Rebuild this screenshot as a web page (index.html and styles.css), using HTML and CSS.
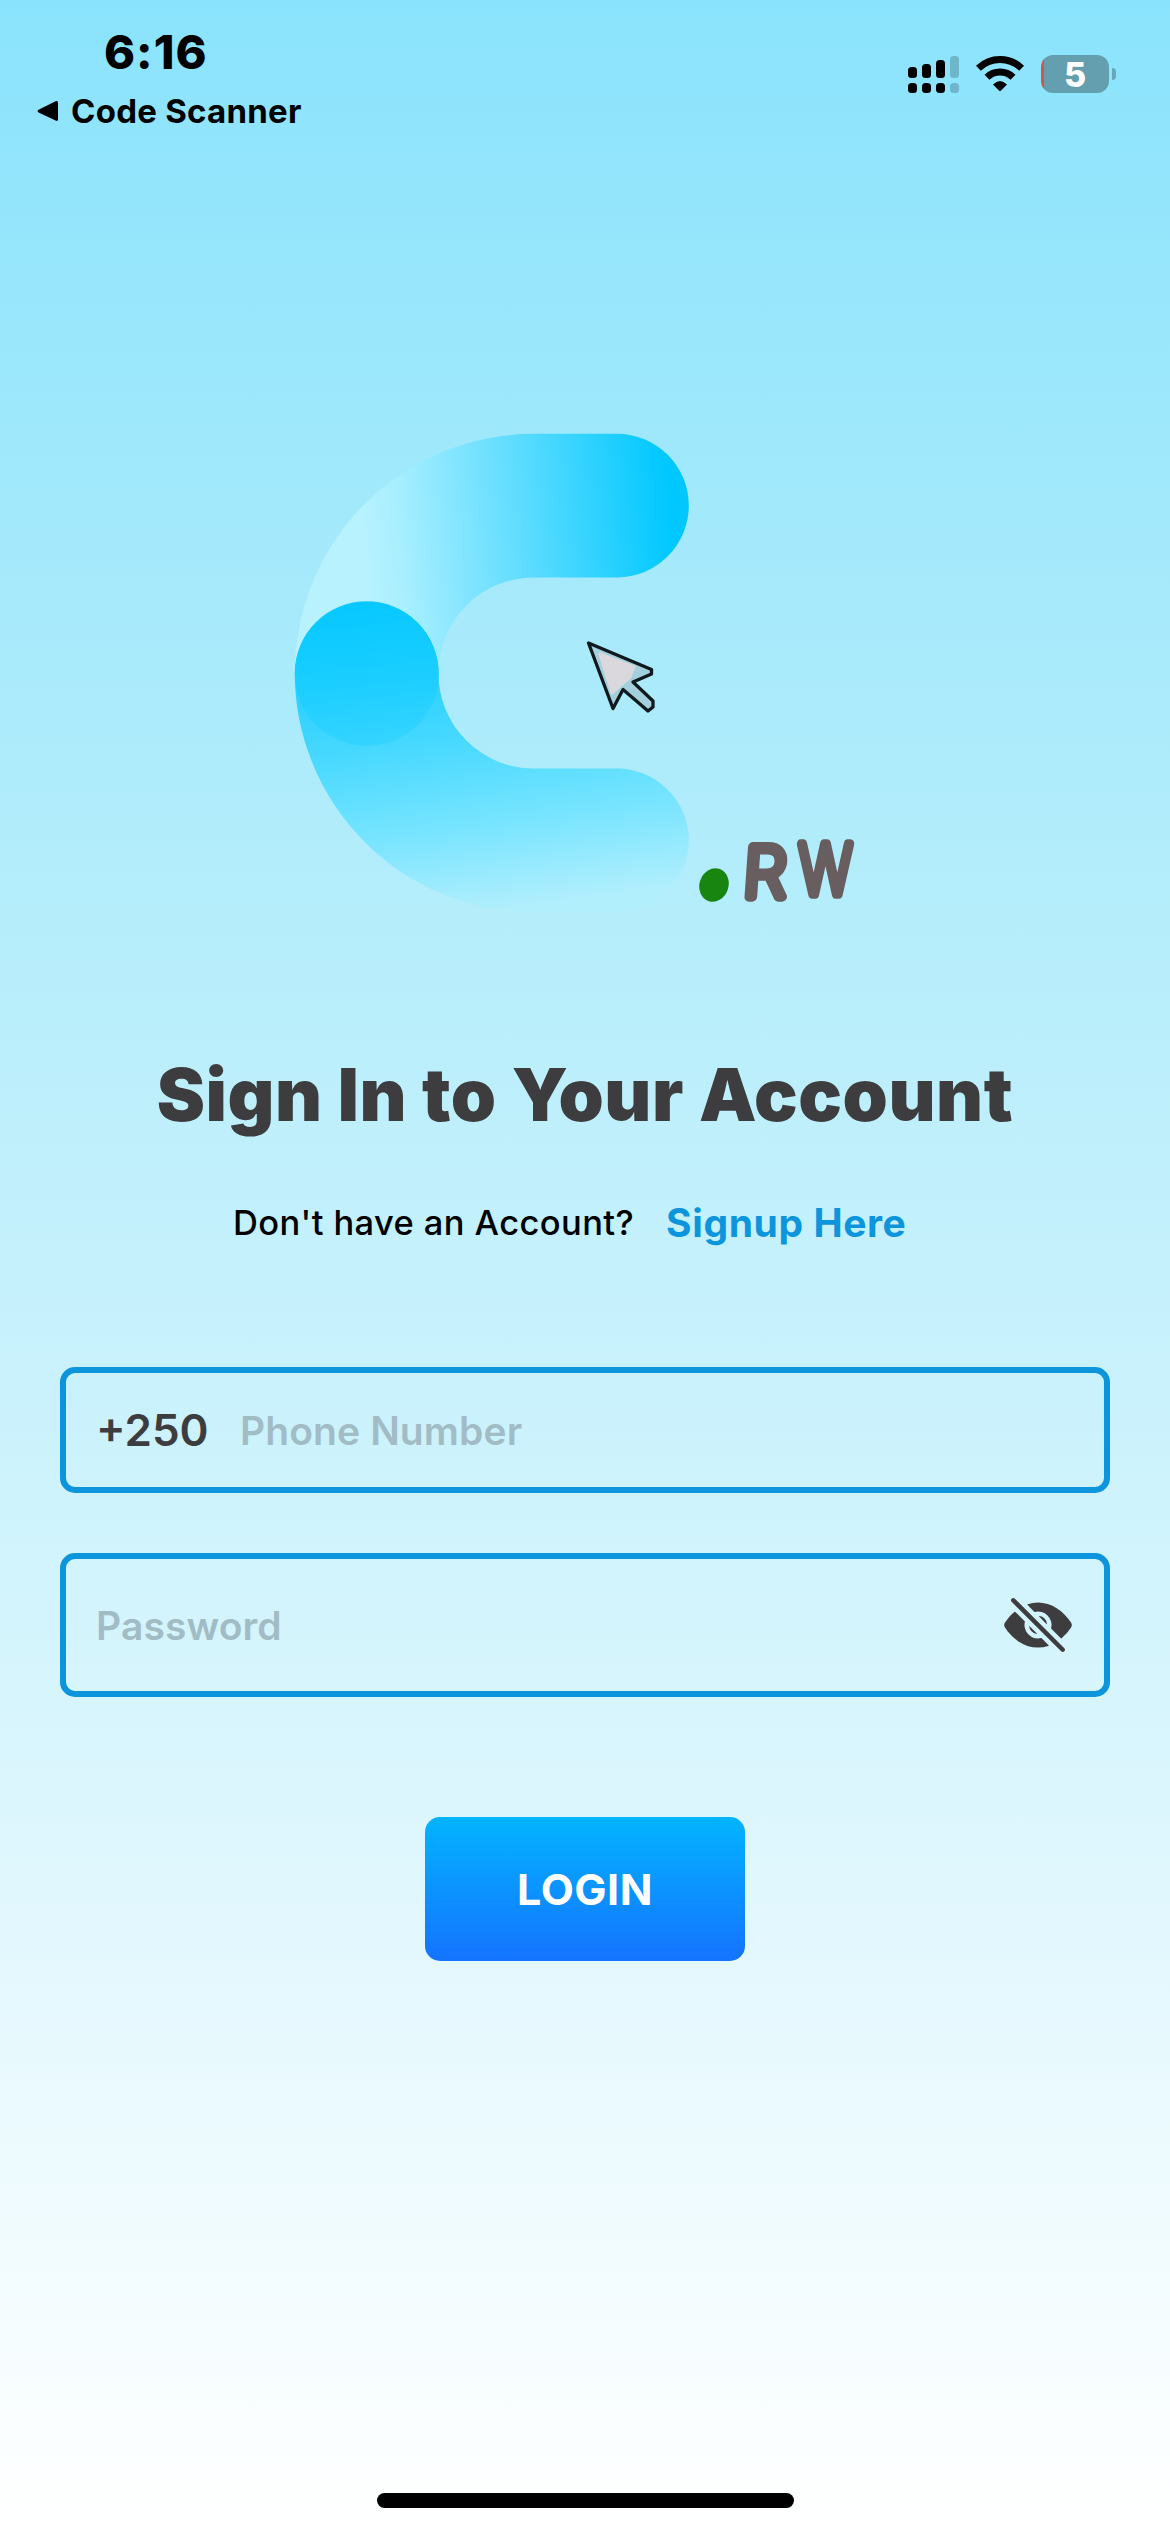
FILE: index.html
```html
<!DOCTYPE html>
<html lang="en">
<head>
<meta charset="utf-8">
<title>Sign In</title>
<link rel="stylesheet" href="styles.css">
</head>
<body>
<div class="screen">
  <header class="status-bar">
    <div class="status-left">
      <div class="time">6:16</div>
      <div class="back-app">
        <svg class="back-arrow" width="22" height="22" viewBox="0 0 22 22"><path d="M2 9.400 18.600 1.300Q21 .4 21 3V19Q21 21.600 18.600 20.600L2 12.800Q-1 11 2 9.400Z"/></svg>
        <span>Code Scanner</span>
      </div>
    </div>
    <div class="status-right">
      <svg width="51" height="38" viewBox="0 0 51 38">
        <rect x="0" y="12" width="9" height="11" rx="3.500"/><rect x="14" y="9" width="9" height="14" rx="3.500"/><rect x="28" y="5" width="9" height="18" rx="3.500"/>
        <rect x="0" y="28" width="9" height="10" rx="3.500"/><rect x="14" y="28" width="9" height="10" rx="3.500"/><rect x="28" y="28" width="9" height="10" rx="3.500"/>
        <g fill="#6fb6ca"><rect x="42" y="1" width="9" height="22" rx="3.500"/><rect x="42" y="28" width="9" height="10" rx="3.500"/></g>
      </svg>
      <svg class="wifi" width="48" height="38" viewBox="0 0 48 38">
        <g fill="none" stroke="#000" stroke-width="7"><path d="M2.400 13.200A31 31 0 0 1 45.600 13.200"/><path d="M11 22.300A18.500 18.500 0 0 1 37 22.300"/></g>
        <path d="M17 29.500Q24 22.500 31 29.500L24.800 35.700Q24 36.300 23.200 35.700Z"/>
      </svg>
      <div class="battery"><div class="battery-body"><span>5</span></div><div class="battery-tip"></div></div>
    </div>
  </header>

  <svg class="logo" width="620" height="510" viewBox="270 420 620 510">
    <defs>
      <linearGradient id="upper" gradientUnits="userSpaceOnUse" x1="362" y1="560" x2="672" y2="530">
        <stop offset="0" stop-color="#b8f2ff"/><stop offset=".12" stop-color="#a9efff"/><stop offset=".5" stop-color="#62ddff"/><stop offset="1" stop-color="#00c8ff"/>
      </linearGradient>
      <linearGradient id="lower" gradientUnits="userSpaceOnUse" x1="410" y1="620" x2="450" y2="918">
        <stop offset="0" stop-color="#12caff"/><stop offset=".4" stop-color="#45d8ff"/><stop offset=".7" stop-color="#76e4ff"/><stop offset="1" stop-color="#b2effd"/>
      </linearGradient>
      <linearGradient id="joint" gradientUnits="userSpaceOnUse" x1="360" y1="602" x2="376" y2="746">
        <stop offset="0" stop-color="#06c8ff"/><stop offset=".55" stop-color="#1bceff"/><stop offset="1" stop-color="#36d4ff"/>
      </linearGradient>
    </defs>
    <g fill="none" stroke-width="143.600" stroke-linecap="round">
      <path stroke="url(#upper)" d="M617 505.600H534A167.400 167.400 0 0 0 366.600 673"/>
      <path stroke="url(#lower)" d="M366.600 673A167.400 167.400 0 0 0 534 840.400H617"/>
    </g>
    <circle cx="366.800" cy="674" r="72" fill="url(#joint)"/>
    <path d="M588.500 643 651.500 669.500V674L633 682 653 701V707L648 711 623 689.500 613 708.500Z" fill="#a3d0dc" stroke="#101a1e" stroke-width="3.300" stroke-linejoin="round"/>
    <path d="M600 654 634 667 630 677 620 686 612 693Z" fill="#dad8dc" stroke="#dad8dc" stroke-width="3" stroke-linejoin="round"/>
    <ellipse cx="714" cy="885" rx="14.500" ry="17" transform="rotate(18 714 885)" fill="#188511"/>
    <g class="logo-text">
      <text transform="translate(742 896.500) skewX(-4)" textLength="43" lengthAdjust="spacingAndGlyphs">R</text>
      <text transform="translate(799 894)" textLength="53" lengthAdjust="spacingAndGlyphs">W</text>
    </g>
  </svg>

  <main class="content">
    <h1>Sign In to Your Account</h1>
    <p class="signup"><span class="question">Don't have an Account?</span><a class="link">Signup Here</a></p>
    <div class="field phone"><span class="prefix">+250</span><span class="placeholder">Phone Number</span></div>
    <div class="field password">
      <span class="placeholder">Password</span>
      <svg width="72" height="72" viewBox="0 0 512 512" fill="#3d3d3f"><path d="M432 448a15.920 15.920 0 01-11.310-4.690l-352-352a16 16 0 0122.620-22.620l352 352A16 16 0 01432 448zM248 315.850l-51.790-51.790a2 2 0 00-3.390 1.690 64.110 64.110 0 0053.490 53.490 2 2 0 001.690-3.390zM264 196.150L315.870 248a2 2 0 003.400-1.690 64.130 64.130 0 00-53.550-53.550 2 2 0 00-1.720 3.390z"/><path d="M491 273.360a32.200 32.200 0 00-.1-34.760c-26.460-40.920-60.790-75.680-99.270-100.530C349 110.550 302 96 255.680 96a226.540 226.540 0 00-71.820 11.790 4 4 0 00-1.560 6.630l47.240 47.240a4 4 0 003.820 1.050 96 96 0 01116 116 4 4 0 001.050 3.810l67.950 68a4 4 0 005.400.24 343.810 343.810 0 0067.240-77.400zM256 352a96 96 0 01-93.300-118.630 4 4 0 00-1.050-3.810l-66.840-66.870a4 4 0 00-5.410-.23c-24.390 20.810-47 46.130-67.670 75.720a31.920 31.920 0 00-.64 35.540c26.410 41.330 60.390 76.140 98.280 100.650C162.060 402 207.920 416 255.680 416a238.220 238.220 0 0072.640-11.550 4 4 0 001.610-6.640l-47.470-47.460a4 4 0 00-3.810-1.050A96 96 0 01256 352z"/></svg>
    </div>
    <button class="login">LOGIN</button>
  </main>
  <div class="home-bar"></div>
</div>
</body>
</html>
```

FILE: styles.css
```css
* { box-sizing: border-box; }
body { margin: 0; font-family: Inter, "Liberation Sans", sans-serif; }
.screen {
  width: 1170px;
  height: 2532px;
  overflow: hidden;
  display: flex;
  flex-direction: column;
  background: linear-gradient(180deg, #8ae3fc 0%, #b4edfb 35%, #d7f5fd 67%, #ffffff 100%);
}
.status-bar {
  height: 140px;
  padding: 30px 54px 0 37px;
  display: flex;
  justify-content: space-between;
}
.time { margin-left: 67px; font-size: 47px; font-weight: 800; line-height: 44px; letter-spacing: 1px; white-space: nowrap; }
.back-app {
  display: flex;
  align-items: center;
  gap: 12px;
  margin-top: 17px;
  font-size: 33px;
  font-weight: 650;
  line-height: 40px;
  letter-spacing: 0.25px;
  white-space: nowrap;
}
.status-right { display: flex; height: 38px; margin-top: 25px; }
.wifi { margin: 0 17px; }
.battery { display: flex; align-items: center; gap: 3px; }
.battery-body {
  width: 68px;
  height: 38px;
  border-radius: 12px;
  background: linear-gradient(90deg, #e0504b 3.500px, #639fae 3.500px);
  color: #fff;
  font-size: 34px;
  font-weight: 800;
  line-height: 39px;
  text-align: center;
}
.battery-tip { width: 4px; height: 12px; border-radius: 0 6px 6px 0; background: #66a9ba; }
.logo { display: block; margin: 280px 0 0 270px; }
.logo-text {
  fill: #685e60;
  stroke: #685e60;
  stroke-width: 9.5px;
  stroke-linejoin: round;
  font-family: Inter, sans-serif;
  font-size: 69px;
  font-weight: 200;
}
.content { display: flex; flex-direction: column; align-items: center; padding: 0 60px; margin-top: 125px; }
h1 {
  margin: 0;
  color: #3d3d3f;
  font-size: 72.5px;
  font-weight: 900;
  line-height: 80px;
  letter-spacing: 0.55px;
  white-space: nowrap;
}
.signup {
  display: flex;
  align-items: center;
  align-self: flex-start;
  gap: 32px;
  margin: 63px 0 0 173px;
  line-height: 50px;
  white-space: nowrap;
}
.question { font-size: 34.5px; font-weight: 550; letter-spacing: 0.4px; }
.link { color: #0c95dc; font-size: 39px; font-weight: 650; letter-spacing: 0.6px; }
.field {
  width: 1050px;
  border: 6px solid #0c95dc;
  border-radius: 15px;
  padding: 0 30px;
  display: flex;
  align-items: center;
  color: #3d3d3f;
}
.phone { height: 126px; margin-top: 119px; }
.password { height: 144px; margin-top: 60px; justify-content: space-between; }
.prefix { width: 144px; font-size: 44px; font-weight: 600; }
.placeholder { color: #a2bcc6; font-size: 39px; font-weight: 570; letter-spacing: 0.1px; }
.login {
  width: 320px;
  height: 144px;
  margin-top: 120px;
  padding: 0;
  border: 0;
  border-radius: 15px;
  background: linear-gradient(180deg, #03b4ff, #1473ff);
  color: #fff;
  font: 660 43px Inter, sans-serif;
  letter-spacing: 0.5px;
}
.home-bar { width: 417px; height: 15px; margin: auto auto 24px; border-radius: 8px; background: #000; }
```
